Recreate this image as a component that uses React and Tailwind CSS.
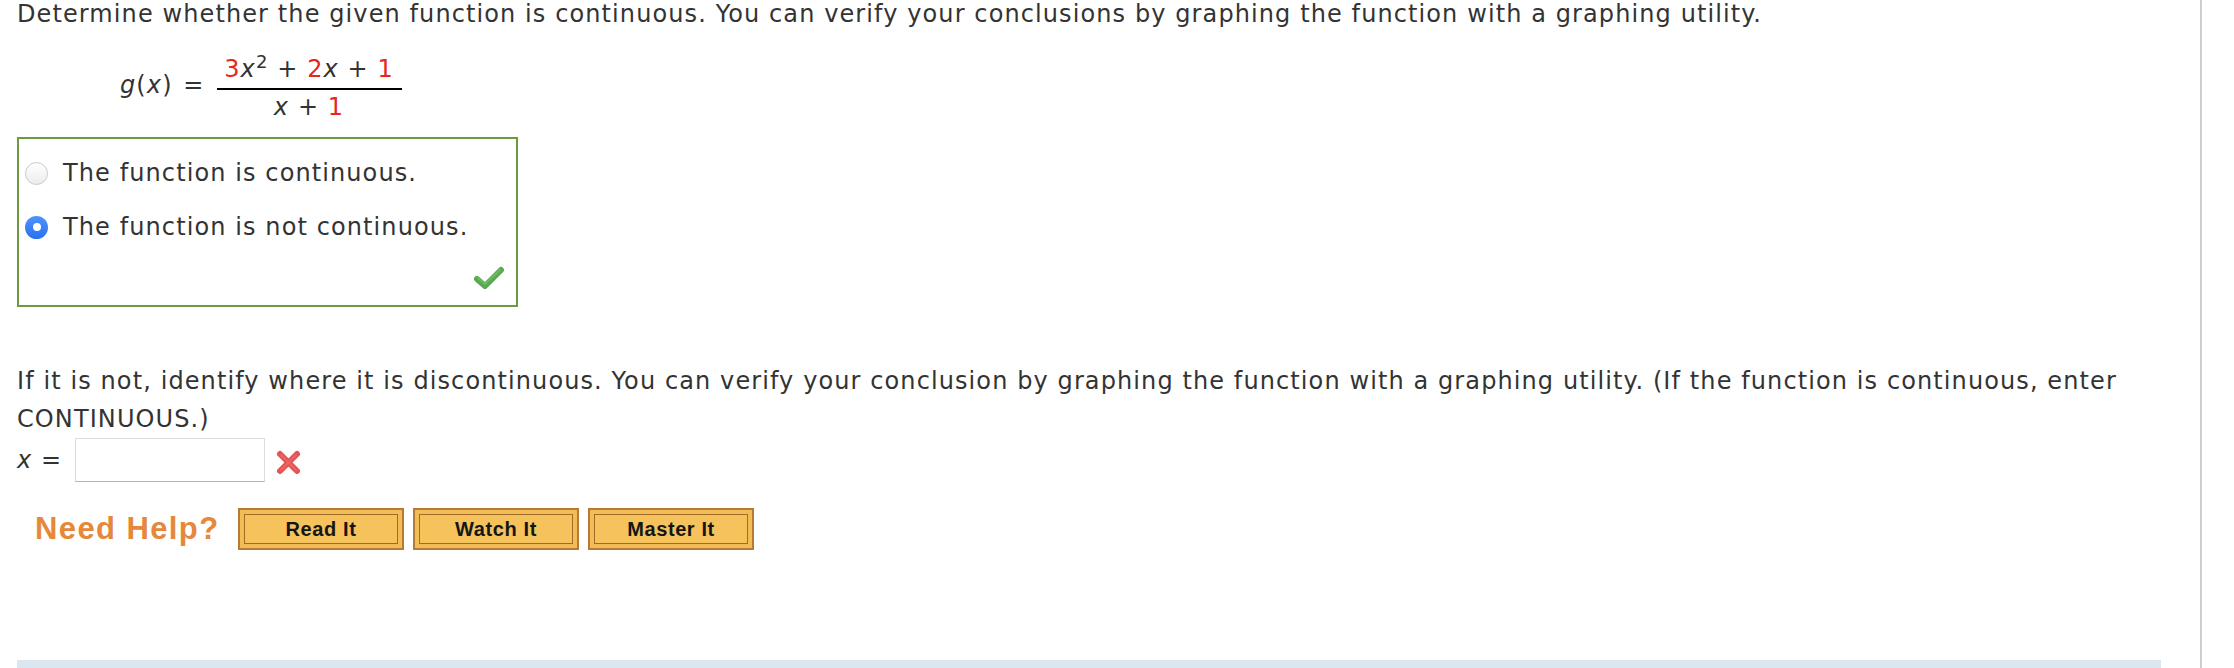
import React from "react";

const body = { fontFamily: '"DejaVu Sans", Verdana, sans-serif' };
const help = { fontFamily: '"Liberation Sans", Arial, sans-serif' };

function Radio({ checked }) {
  if (checked) {
    return (
      <span className="flex h-[23px] w-[23px] shrink-0 items-center justify-center rounded-full bg-gradient-to-b from-[#4f94fb] to-[#2a6ff0]">
        <span className="h-[8px] w-[8px] rounded-full bg-white" />
      </span>
    );
  }
  return (
    <span className="h-[23px] w-[23px] shrink-0 rounded-full border border-[#c9c9c9] bg-gradient-to-b from-white to-[#ececec]" />
  );
}

function Check() {
  return (
    <svg width="32" height="26" viewBox="0 0 32 26">
      <path d="M4 14 L12 21 L28 5" fill="none" stroke="#5aa851" strokeWidth="6" strokeLinecap="round" strokeLinejoin="round" />
      <path d="M5 13 L12 19 L27 5" fill="none" stroke="#7cc46f" strokeWidth="2" strokeLinecap="round" strokeLinejoin="round" opacity="0.6" />
    </svg>
  );
}

function Cross() {
  return (
    <svg width="27" height="27" viewBox="0 0 27 27">
      <path d="M5 5 L22 22 M22 5 L5 22" stroke="#e35454" strokeWidth="6" strokeLinecap="round" />
      <path d="M6 6 L21 21 M21 6 L6 21" stroke="#f07a7a" strokeWidth="1.5" strokeLinecap="round" opacity="0.6" />
    </svg>
  );
}

function HelpButton({ label }) {
  return (
    <div className="h-[42px] w-[166px] border-2 border-[#b57a36] bg-[#f3bd55] p-[4px]">
      <div
        className="flex h-full w-full items-center justify-center border border-[#a26a28] bg-[#f5c25c] text-[20px] font-bold tracking-[0.6px] text-[#161616]"
        style={help}
      >
        {label}
      </div>
    </div>
  );
}

export default function App() {
  return (
    <div className="flex h-[668px] w-[2234px] overflow-hidden bg-white text-[#333]" style={body}>
      <div className="flex h-full w-[2202px] flex-col border-r-2 border-[#cdcdcd]">
        <div className="pl-[17px] text-[24px] tracking-[1.1px]">
          <p className="leading-[28px]">
            Determine whether the given function is continuous. You can verify your conclusions by graphing the function with a graphing utility.
          </p>

          <div className="mt-[27px] flex items-start pl-[103px]">
            <div className="mt-[16px] leading-[28px]">
              <i>g</i>(<i>x</i>) <span className="ml-[2px]">=</span>
            </div>
            <div className="ml-[12px] flex w-[185px] flex-col items-center">
              <div className="pb-[5px] leading-[28px]">
                <span className="text-[#e8261c]">3</span>
                <i>x</i>
                <sup className="relative top-[-9px] text-[18px]">2</sup> + <span className="text-[#e8261c]">2</span>
                <i>x</i> + <span className="text-[#e8261c]">1</span>
              </div>
              <div className="h-[2px] w-full bg-black" />
              <div className="pt-[3px] leading-[28px]">
                <i>x</i> + <span className="text-[#e8261c]">1</span>
              </div>
            </div>
          </div>
        </div>

        <div className="ml-[17px] mt-[16px] flex h-[170px] w-[501px] flex-col border-2 border-[#6b9d3f] pl-[6px] pr-[11px] pt-[20px] text-[24px] tracking-[1.1px]">
          <div className="flex h-[28px] items-center gap-[15px]">
            <Radio />
            <span className="leading-[28px]">The function is continuous.</span>
          </div>
          <div className="mt-[26px] flex h-[28px] items-center gap-[15px]">
            <Radio checked />
            <span className="leading-[28px]">The function is not continuous.</span>
          </div>
          <div className="mt-[24px] flex justify-end">
            <Check />
          </div>
        </div>

        <div className="w-[2161px] pl-[17px] text-[24px] tracking-[1.1px]">
          <p className="mt-[55px] w-[2144px] leading-[38px]">
            If it is not, identify where it is discontinuous. You can verify your conclusion by graphing the function with a graphing utility. (If the function is continuous, enter CONTINUOUS.)
          </p>
          <div className="flex h-[44px] items-center">
            <span>
              <i>x</i> =
            </span>
            <div className="ml-[13px] h-[44px] w-[190px] border border-[#dcdcdc] border-b-[#b5b5b5] bg-white" />
            <span className="ml-[10px] mt-[4px]">
              <Cross />
            </span>
          </div>
          <div className="mt-[24px] flex items-center">
            <span
              className="ml-[18px] w-[203px] text-[31px] font-bold tracking-[1.4px] text-[#e5883a]"
              style={help}
            >
              Need Help?
            </span>
            <div className="flex gap-[9px]">
              <HelpButton label="Read It" />
              <HelpButton label="Watch It" />
              <HelpButton label="Master It" />
            </div>
          </div>
        </div>

        <div className="ml-[17px] mt-auto h-[8px] w-[2144px] bg-[#dce6ee]" />
      </div>
    </div>
  );
}
